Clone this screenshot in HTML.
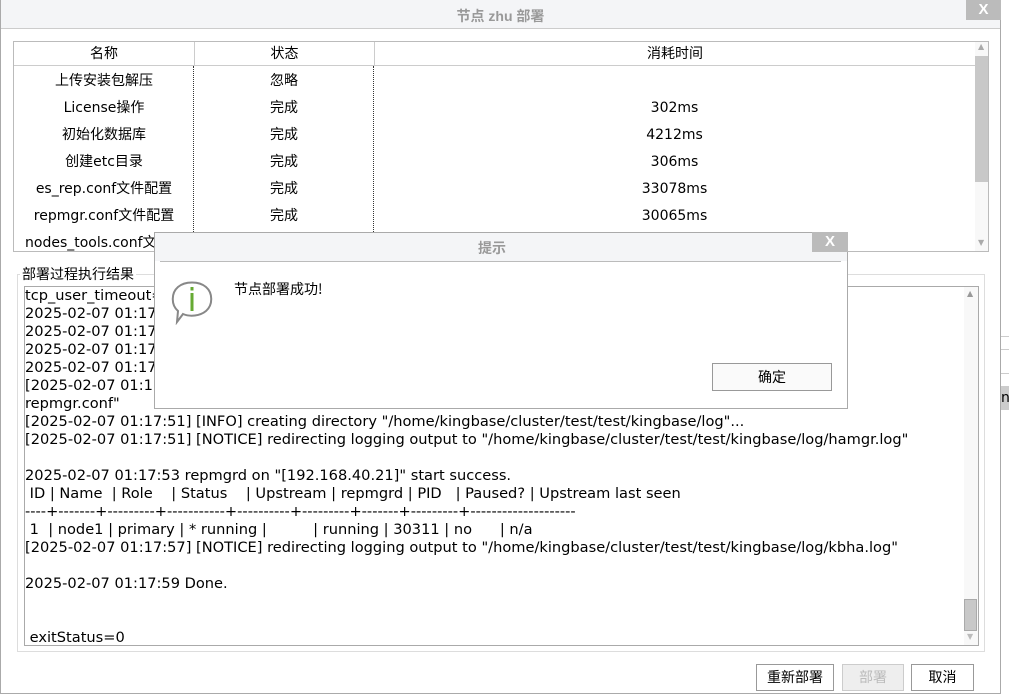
<!DOCTYPE html>
<html><head><meta charset="utf-8"><style>
*{box-sizing:border-box;margin:0;padding:0}
body{width:1009px;height:700px;position:relative;overflow:hidden;background:#fff;font-family:"DejaVu Sans","Noto Sans CJK SC",sans-serif;font-size:14px;color:#000}
.abs{position:absolute}
.t{font-family:"Liberation Sans","Noto Sans CJK SC",sans-serif}
.row{position:absolute;left:0;height:27px;line-height:27px;width:100%}
.c{position:absolute;text-align:center}
.log{font-size:14.6px}
.log div{height:18px;line-height:17px;white-space:pre}
.btn{position:absolute;border:1px solid #999;background:#fff;text-align:center;font-family:"Noto Sans CJK SC",sans-serif;font-size:14px;line-height:25px}
</style></head><body>
<div class="abs" style="left:0;top:0;width:1001px;height:694px;border:1px solid #aaa;border-top:none;background:#fff"></div>
<div class="abs" style="left:1px;top:0;width:999px;height:29px;background:#f4f5f7;border-bottom:1px solid #ccc"></div>
<div class="abs t" style="left:0;top:6px;width:1001px;text-align:center;color:#999;font-weight:bold;font-size:14px">节点 zhu 部署</div>
<div class="abs" style="left:966px;top:0;width:35px;height:20px;background:#bbb;color:#fff;text-align:center;font:bold 15px/20px 'Liberation Sans'">X</div>
<div class="abs" style="left:1001px;top:336px;width:8px;border-top:1px solid #ccc"></div>
<div class="abs" style="left:1001px;top:349px;width:8px;border-top:1px solid #ccc"></div>
<div class="abs" style="left:1001px;top:373px;width:8px;border-top:1px solid #ccc"></div>
<div class="abs" style="left:1001px;top:386px;width:8px;height:24px;background:#ccc;font-size:14px;line-height:24px">n</div>

<!-- table -->
<div class="abs" style="left:13px;top:41px;width:976px;height:211px;border:1px solid #bbb;overflow:hidden">
 <div class="abs" style="left:0;top:0;width:961px;height:24px;border-bottom:1px solid #ccc;line-height:24px">
  <div class="c" style="left:0;width:180px">名称</div>
  <div class="c" style="left:180px;width:180px;border-left:1px solid #ccc;height:24px">状态</div>
  <div class="c" style="left:360px;width:601px;border-left:1px solid #ccc;height:24px">消耗时间</div>
 </div>
 <div class="abs" style="left:179px;top:24px;height:190px;border-left:1px dotted #333"></div>
 <div class="abs" style="left:359px;top:24px;height:190px;border-left:1px dotted #333"></div>
 <div class="abs" style="left:0;top:26px;width:961px">
  <div class="row" style="top:0"><div class="c" style="left:0;width:180px">上传安装包解压</div><div class="c" style="left:180px;width:180px">忽略</div></div>
  <div class="row" style="top:27px"><div class="c" style="left:0;width:180px">License操作</div><div class="c" style="left:180px;width:180px">完成</div><div class="c" style="left:360px;width:601px">302ms</div></div>
  <div class="row" style="top:54px"><div class="c" style="left:0;width:180px">初始化数据库</div><div class="c" style="left:180px;width:180px">完成</div><div class="c" style="left:360px;width:601px">4212ms</div></div>
  <div class="row" style="top:81px"><div class="c" style="left:0;width:180px">创建etc目录</div><div class="c" style="left:180px;width:180px">完成</div><div class="c" style="left:360px;width:601px">306ms</div></div>
  <div class="row" style="top:108px"><div class="c" style="left:0;width:180px">es_rep.conf文件配置</div><div class="c" style="left:180px;width:180px">完成</div><div class="c" style="left:360px;width:601px">33078ms</div></div>
  <div class="row" style="top:135px"><div class="c" style="left:0;width:180px">repmgr.conf文件配置</div><div class="c" style="left:180px;width:180px">完成</div><div class="c" style="left:360px;width:601px">30065ms</div></div>
  <div class="row" style="top:162px"><div class="abs" style="left:11px">nodes_tools.conf文件配置</div></div>
 </div>
 <div class="abs" style="left:961px;top:0;width:14px;height:209px;background:#f8f8f8"></div>
 <div class="abs" style="left:961px;top:14px;width:13px;height:126px;background:#c8c8c8"></div>
 <div class="abs" style="left:964px;top:0;font-size:8px;color:#aaa">▲</div>
 <div class="abs" style="left:964px;top:196px;font-size:8px;color:#aaa">▼</div>
</div>

<!-- log group -->
<div class="abs" style="left:17px;top:274px;width:968px;height:378px;border:1px solid #ddd"></div>
<div class="abs" style="left:20px;top:264px;background:#fff;padding:0 2px;font-family:'Noto Sans CJK SC',sans-serif;font-size:14px;line-height:20px">部署过程执行结果</div>
<div class="abs log" style="left:24px;top:286px;width:955px;height:360px;border:1px solid #aaa;overflow:hidden;padding-left:0">
<div>tcp_user_timeout=</div><div>2025-02-07 01:17</div><div>2025-02-07 01:17</div><div>2025-02-07 01:17</div><div>2025-02-07 01:17</div><div>[2025-02-07 01:17                                                                                         n/../etc/</div><div>repmgr.conf"</div><div>[2025-02-07 01:17:51] [INFO] creating directory "/home/kingbase/cluster/test/test/kingbase/log"...</div><div>[2025-02-07 01:17:51] [NOTICE] redirecting logging output to "/home/kingbase/cluster/test/test/kingbase/log/hamgr.log"</div><div></div><div>2025-02-07 01:17:53 repmgrd on "[192.168.40.21]" start success.</div><div> ID | Name  | Role    | Status    | Upstream | repmgrd | PID   | Paused? | Upstream last seen</div><div>----+-------+---------+-----------+----------+---------+-------+---------+--------------------</div><div> 1  | node1 | primary | * running |          | running | 30311 | no      | n/a</div><div>[2025-02-07 01:17:57] [NOTICE] redirecting logging output to "/home/kingbase/cluster/test/test/kingbase/log/kbha.log"</div><div></div><div>2025-02-07 01:17:59 Done.</div><div></div><div></div><div> exitStatus=0</div>
 <div class="abs" style="left:939px;top:0;width:14px;height:358px;background:#f8f8f8"></div>
 <div class="abs" style="left:939px;top:312px;width:13px;height:32px;background:#c8c8c8;border:1px solid #aaa"></div>
 <div class="abs" style="left:942px;top:2px;font-size:8px;color:#999;line-height:10px">▲</div>
 <div class="abs" style="left:942px;top:345px;font-size:8px;color:#bbb;line-height:10px">▼</div>
</div>

<div class="btn" style="left:756px;top:664px;width:78px;height:27px">重新部署</div>
<div class="btn" style="left:842px;top:664px;width:62px;height:27px;background:#eee;border-color:#ccc;color:#bbb">部署</div>
<div class="btn" style="left:911px;top:664px;width:63px;height:27px">取消</div>

<!-- modal -->
<div class="abs" style="left:154px;top:232px;width:694px;height:177px;border:1px solid #aaa;background:#fff"></div>
<div class="abs" style="left:155px;top:233px;width:692px;height:28px;background:#f4f5f7"></div>
<div class="abs" style="left:160px;top:261px;width:681px;border-top:1px solid #bbb"></div>
<div class="abs t" style="left:162px;top:238px;width:660px;text-align:center;color:#999;font-weight:bold;font-size:14px">提示</div>
<div class="abs" style="left:812px;top:232px;width:36px;height:20px;background:#bbb;color:#fff;text-align:center;font:bold 15px/20px 'Liberation Sans'">X</div>
<svg class="abs" style="left:168px;top:279px" width="48" height="46" viewBox="0 0 48 46">
<path d="M10 32 C3 26 3 14 10 8 C17 2 31 2 38 8 C45 14 45 26 38 32 C32 37 22 38 15 35 L9 43 L10 32Z" fill="#fff" stroke="#888" stroke-width="2"/>
<rect x="22.5" y="8" width="3" height="3.5" fill="#6a3"/><rect x="22.5" y="14" width="3" height="18" fill="#6a3"/>
</svg>
<div class="abs" style="left:234px;top:279px;font-family:'Noto Sans CJK SC',sans-serif;font-size:14px">节点部署成功!</div>
<div class="btn" style="left:712px;top:363px;width:120px;height:28px;background:#fafafa;line-height:27px">确定</div>
</body></html>
